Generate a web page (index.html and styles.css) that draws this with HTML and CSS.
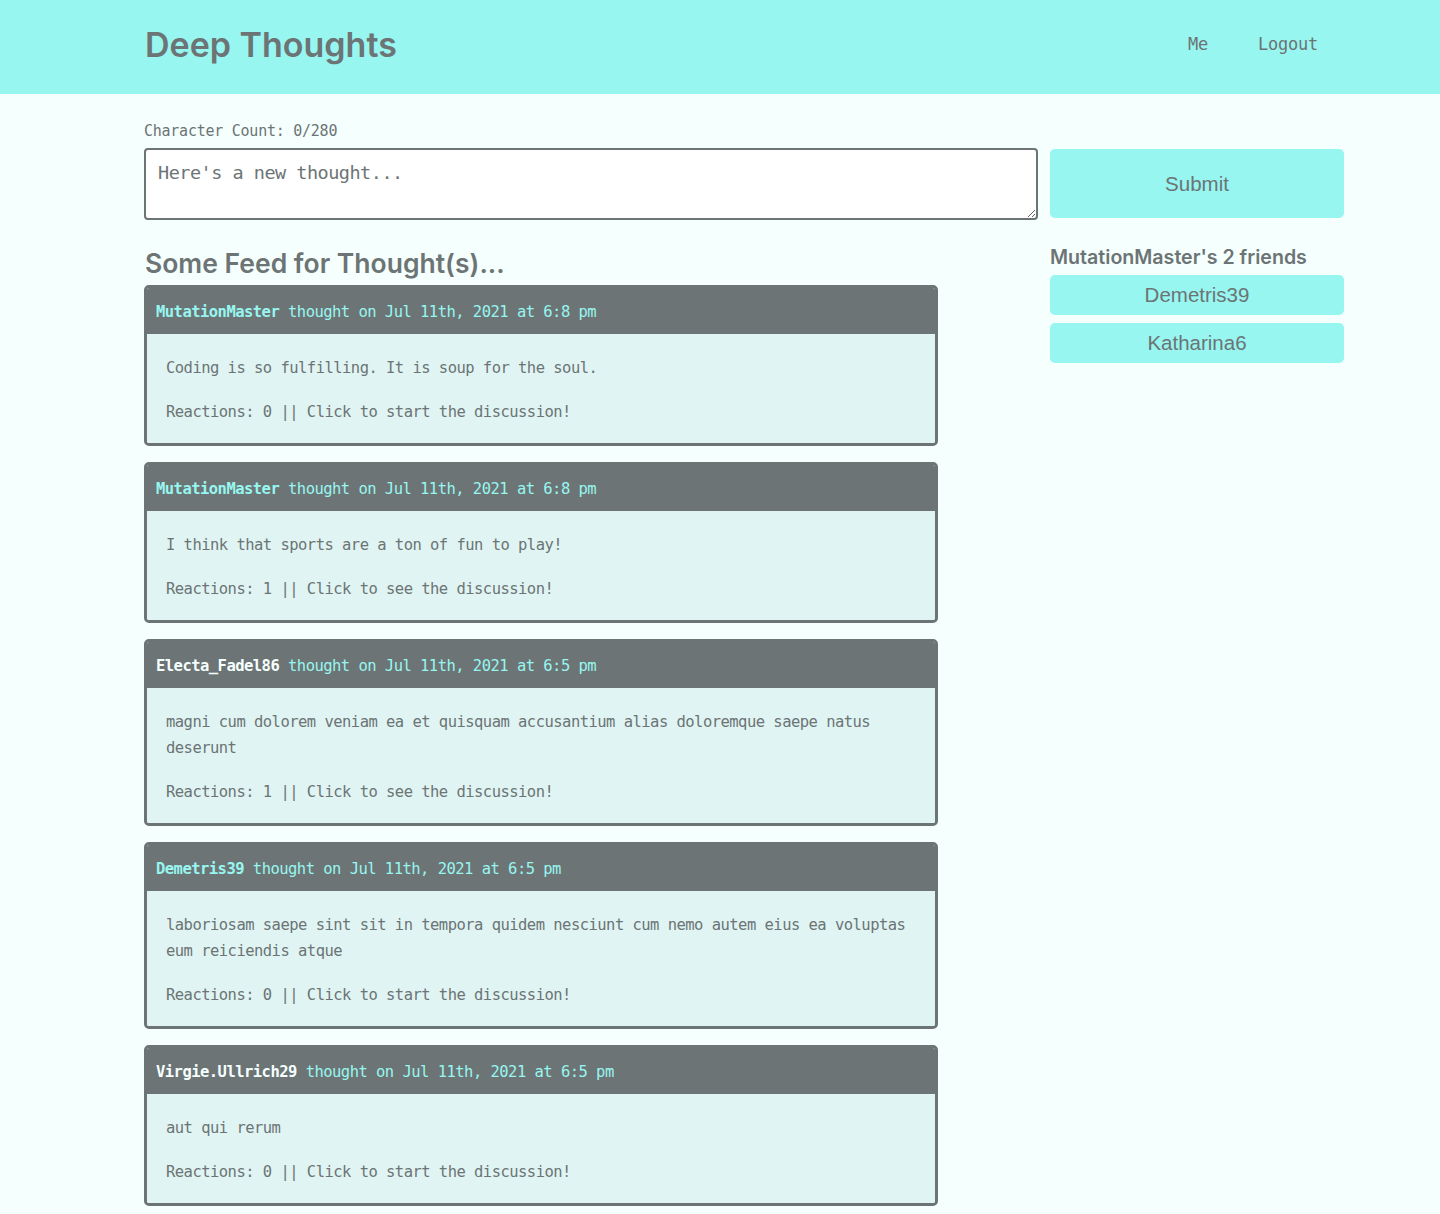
FILE: index.html
```html
<!DOCTYPE html>
<html lang="en">
<head>
<meta charset="utf-8">
<title>Deep Thoughts</title>
<link rel="stylesheet" href="styles.css">
</head>
<body>
<header class="topbar">
  <div class="topbar-inner">
    <h1 class="brand">Deep Thoughts</h1>
    <nav class="nav">
      <a class="nav-link" href="#">Me</a>
      <a class="nav-link" href="#">Logout</a>
    </nav>
  </div>
</header>
<main class="page">
  <div class="compose">
    <label class="count" for="thought">Character Count: 0/280</label>
    <textarea id="thought" class="thought-input" placeholder="Here's a new thought..."></textarea>
  </div>
  <button class="submit" type="button">Submit</button>

  <section class="feed">
    <h2 class="feed-title">Some Feed for Thought(s)...</h2>

    <article class="card">
      <div class="card-header"><span class="author author-aqua">MutationMaster</span> thought on Jul 11th, 2021 at 6:8 pm</div>
      <div class="card-body">
        <p>Coding is so fulfilling. It is soup for the soul.</p>
        <p>Reactions: 0 || Click to start the discussion!</p>
      </div>
    </article>

    <article class="card">
      <div class="card-header"><span class="author author-aqua">MutationMaster</span> thought on Jul 11th, 2021 at 6:8 pm</div>
      <div class="card-body">
        <p>I think that sports are a ton of fun to play!</p>
        <p>Reactions: 1 || Click to see the discussion!</p>
      </div>
    </article>

    <article class="card">
      <div class="card-header"><span class="author author-light">Electa_Fadel86</span> thought on Jul 11th, 2021 at 6:5 pm</div>
      <div class="card-body">
        <p>magni cum dolorem veniam ea et quisquam accusantium alias doloremque saepe natus deserunt</p>
        <p>Reactions: 1 || Click to see the discussion!</p>
      </div>
    </article>

    <article class="card">
      <div class="card-header"><span class="author author-aqua">Demetris39</span> thought on Jul 11th, 2021 at 6:5 pm</div>
      <div class="card-body">
        <p>laboriosam saepe sint sit in tempora quidem nesciunt cum nemo autem eius ea voluptas eum reiciendis atque</p>
        <p>Reactions: 0 || Click to start the discussion!</p>
      </div>
    </article>

    <article class="card">
      <div class="card-header"><span class="author author-light">Virgie.Ullrich29</span> thought on Jul 11th, 2021 at 6:5 pm</div>
      <div class="card-body">
        <p>aut qui rerum</p>
        <p>Reactions: 0 || Click to start the discussion!</p>
      </div>
    </article>
  </section>

  <aside class="friends">
    <h5 class="friends-title">MutationMaster's 2 friends</h5>
    <a class="friend" href="#">Demetris39</a>
    <a class="friend" href="#">Katharina6</a>
  </aside>
</main>
</body>
</html>
```

FILE: styles.css
```css
* { box-sizing: border-box; }

body {
  margin: 0;
  background: #f5fffd;
  color: #6c7475;
  font-family: "DejaVu Sans Mono", "Liberation Mono", monospace;
}

.topbar {
  background: #97f6f0;
  height: 94px;
}

.topbar-inner {
  margin-left: 144px;
  width: 1200px;
  height: 94px;
  display: flex;
  align-items: center;
  justify-content: space-between;
  padding-right: 26px;
  padding-bottom: 6px;
}

.brand {
  margin: 0;
  font-family: "Inter", "Open Sans", sans-serif;
  font-weight: 600;
  font-size: 34px;
  letter-spacing: 0;
  color: #6c7475;
  padding-left: 1px;
}

.nav {
  display: flex;
  gap: 50px;
}

.nav-link {
  color: #6c7475;
  text-decoration: none;
  font-size: 17px;
  letter-spacing: -0.24px;
}

.page {
  margin-left: 144px;
  width: 1200px;
  display: grid;
  grid-template-columns: 894px 294px;
  column-gap: 12px;
  padding-top: 26px;
  padding-bottom: 40px;
}

.compose {
  display: flex;
  flex-direction: column;
}

.count {
  font-size: 15px;
  letter-spacing: -0.25px;
  line-height: 22px;
  margin-bottom: 6px;
}

.thought-input {
  display: block;
  width: 894px;
  height: 72px;
  border: 2px solid #6c7475;
  border-radius: 4px;
  background: #fff;
  padding: 12px 12px;
  font-family: "DejaVu Sans Mono", "Liberation Mono", monospace;
  font-size: 18.5px;
  letter-spacing: -0.5px;
  color: #6c7475;
  resize: vertical;
}

.thought-input::placeholder { color: #6c7475; opacity: 1; }

.submit {
  align-self: end;
  margin-bottom: 2px;
  height: 69px;
  border: none;
  border-radius: 5px;
  background: #97f6f0;
  color: #6c7475;
  font-family: "Liberation Sans", Arial, sans-serif;
  font-size: 20.5px;
}

.feed {
  width: 794px;
}

.feed-title {
  margin: 26px 0 5px 1px;
  font-family: "Inter", "Open Sans", sans-serif;
  font-weight: 600;
  font-size: 26.5px;
  line-height: 34px;
  color: #6c7475;
}

.card {
  border: 3px solid #6c7475;
  border-radius: 5px;
  margin-bottom: 16px;
  overflow: hidden;
}

.card-header {
  background: #6c7475;
  color: #97f6f0;
  padding: 11px 9px 9px;
  font-size: 15.5px;
  letter-spacing: -0.53px;
  line-height: 26px;
}

.author { font-weight: bold; }
.author-aqua { color: #97f6f0; }
.author-light { color: #f5fffd; }

.card-body {
  background: #e0f5f3;
  padding: 21px 19px 18px;
  font-size: 15.5px;
  letter-spacing: -0.53px;
  line-height: 26px;
}

.card-body p { margin: 0; }
.card-body p + p { margin-top: 18px; }

.friends {
  display: flex;
  flex-direction: column;
}

.friends-title {
  margin: 25px 0 6px;
  font-family: "Inter", "Open Sans", sans-serif;
  font-weight: 600;
  font-size: 19.6px;
  line-height: 24px;
  color: #6c7475;
}

.friend {
  display: flex;
  align-items: center;
  justify-content: center;
  height: 40px;
  margin-bottom: 8px;
  border-radius: 5px;
  background: #97f6f0;
  color: #6c7475;
  text-decoration: none;
  font-family: "Liberation Sans", Arial, sans-serif;
  font-size: 20.5px;
}
```
